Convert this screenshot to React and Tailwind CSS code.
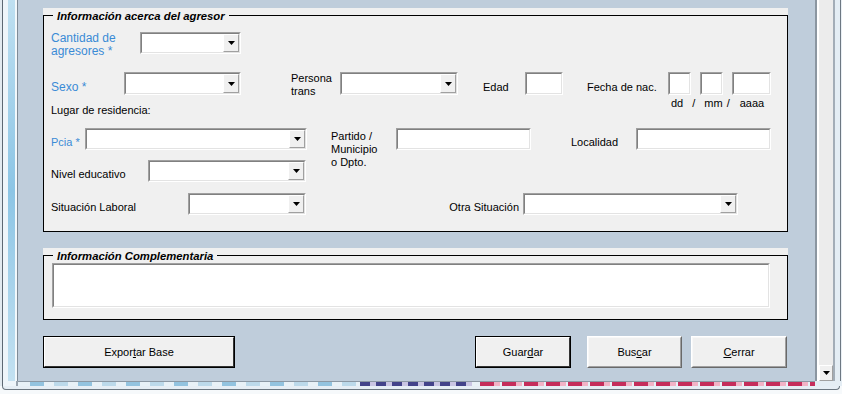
const arrowPath = "M0 0h7L3.5 4z";

function Arrow() {
  return (
    <svg width="7" height="4" viewBox="0 0 7 4">
      <path d={arrowPath} fill="#000" />
    </svg>
  );
}

// sunken edit box (windows classic look)
function Sunken({ className, children }) {
  return (
    <div className={`${className} border border-t-[#a0a0a0] border-l-[#a0a0a0] border-r-white border-b-white`}>
      <div className="h-full flex bg-white border border-t-[#808080] border-l-[#808080] border-r-[#e3e3e3] border-b-[#e3e3e3]">
        {children}
      </div>
    </div>
  );
}

function Combo({ className }) {
  return (
    <Sunken className={className}>
      <div className="flex-1" />
      <div className="w-[16px] flex items-center justify-center bg-[#f0f0f0] border border-t-white border-l-white border-r-[#a0a0a0] border-b-[#a0a0a0]">
        <Arrow />
      </div>
    </Sunken>
  );
}

function Btn({ className, primary, children }) {
  if (primary) {
    return (
      <div className={`${className} h-[32px] border border-black`}>
        <div className="h-full flex items-center justify-center bg-[#f0f0f0] border border-t-white border-l-white border-r-[#333] border-b-[#333] text-[11px]">
          {children}
        </div>
      </div>
    );
  }
  return (
    <div className={`${className} h-[32px] border border-t-white border-l-white border-r-[#696969] border-b-[#696969]`}>
      <div className="h-full flex items-center justify-center bg-[#f0f0f0] border border-t-[#f8f8f8] border-l-[#f8f8f8] border-r-[#a0a0a0] border-b-[#a0a0a0] text-[11px]">
        {children}
      </div>
    </div>
  );
}

function GroupBox({ title, height, children }) {
  return (
    <div className="w-[745px] bg-[#f0f0f0] pt-[7px]">
      <div className={`relative ${height} border border-black`}>
        <span className="absolute left-[9px] -top-[7px] px-[4px] bg-[#f0f0f0] text-[11.3px] leading-[14px] font-bold italic">
          {title}
        </span>
        {children}
      </div>
    </div>
  );
}

const strip = [];
for (let x = 12; x < 340; x += 24) strip.push([x, 14, (x / 24) % 2 < 1 ? "#93c3df" : "#bcd9ea"]);
for (let x = 342; x < 452; x += 16) strip.push([x, 10, "#43438a"], [x + 10, 6, "#c9c5e3"]);
for (let x = 462; x < 797; x += 22) strip.push([x, 14, "#c52d5b"], [x + 14, 6, "#f2b3c6"]);

export default function App() {
  return (
    <div className="w-[842px] h-[394px] overflow-hidden flex flex-col bg-[#f3f7fa] text-black font-['Liberation_Sans',Arial,sans-serif]">
      <div className="flex h-[381px]">
        {/* left window frame */}
        <div className="w-[18px] flex shrink-0">
          <div className="w-[2px] bg-[#e2eaf0]" />
          <div className="w-px bg-[#5d6873]" />
          <div className="w-[5px] bg-[#eef5fa]" />
          <div className="w-[7px] bg-linear-to-b from-[#bfe0f1] via-[#8cc5e5] to-[#c3e1f1]" />
          <div className="w-[2px] bg-[#f2f8fb]" />
          <div className="w-px bg-[#7f8b97]" />
        </div>

        {/* form */}
        <div className="w-[797px] shrink-0 bg-[#bfcddb] pl-[25px] pt-[8px]">
          <GroupBox title="Información acerca del agresor" height="h-[217px]">
            <div className="px-[7px] pt-[16px] text-[11px] leading-[13px]">
              <div className="flex items-start h-[22px]">
                <div className="w-[89px] text-[12px] leading-[13px] text-[#3a8bd6]">
                  Cantidad de
                  <br />
                  agresores *
                </div>
                <Combo className="w-[101px] h-[22px]" />
              </div>

              <div className="flex items-start h-[23px] mt-[18px]">
                <div className="w-[73px] text-[12px] leading-[14px] mt-[8px] text-[#3a8bd6]">Sexo *</div>
                <Combo className="w-[117px] h-[23px]" />
                <div className="ml-[50px] w-[49px]">
                  Persona
                  <br />
                  trans
                </div>
                <Combo className="w-[118px] h-[23px]" />
                <div className="ml-[25px] w-[42px] mt-[9px]">Edad</div>
                <Sunken className="w-[38px] h-[23px]" />
                <div className="ml-[24px] w-[81px] mt-[9px]">Fecha de nac.</div>
                <div className="flex flex-col">
                  <div className="flex">
                    <Sunken className="w-[23px] h-[23px]" />
                    <Sunken className="ml-[9px] w-[23px] h-[23px]" />
                    <Sunken className="ml-[9px] w-[39px] h-[23px]" />
                  </div>
                  <div className="flex mt-[2px] pl-[3px] whitespace-nowrap">
                    <span>dd</span>
                    <span className="ml-[9px]">/</span>
                    <span className="ml-[9px]">mm</span>
                    <span className="ml-[4px]">/</span>
                    <span className="ml-[10px]">aaaa</span>
                  </div>
                </div>
              </div>

              <div className="mt-[9px]">Lugar de residencia:</div>

              <div className="flex items-start h-[22px] mt-[11px]">
                <div className="w-[34px] mt-[8px] text-[#3a8bd6]">Pcia *</div>
                <Combo className="w-[222px] h-[22px]" />
                <div className="ml-[24px] w-[65px] mt-[2px]">
                  Partido /
                  <br />
                  Municipio
                  <br />
                  o Dpto.
                </div>
                <Sunken className="w-[135px] h-[22px]" />
                <div className="ml-[40px] w-[65px] mt-[8px]">Localidad</div>
                <Sunken className="w-[135px] h-[22px]" />
              </div>

              <div className="flex items-start h-[22px] mt-[10px]">
                <div className="w-[97px] mt-[8px]">Nivel educativo</div>
                <Combo className="w-[158px] h-[22px]" />
              </div>

              <div className="flex items-start h-[22px] mt-[11px]">
                <div className="w-[137px] mt-[8px]">Situación Laboral</div>
                <Combo className="w-[118px] h-[22px]" />
                <div className="w-[217px] pr-[4px] mt-[8px] text-right">Otra Situación</div>
                <Combo className="w-[215px] h-[22px]" />
              </div>
            </div>
          </GroupBox>

          <div className="mt-[16px]">
            <GroupBox title="Información Complementaria" height="h-[65px]">
              <div className="pl-[8px] pt-[7px]">
                <Sunken className="w-[718px] h-[45px]" />
              </div>
            </GroupBox>
          </div>

          <div className="flex mt-[16px]">
            <Btn className="w-[192px]" primary>
              <span>
                Expor<u>t</u>ar Base
              </span>
            </Btn>
            <Btn className="ml-[240px] w-[96px]" primary>
              <span>
                Guar<u>d</u>ar
              </span>
            </Btn>
            <Btn className="ml-[16px] w-[95px]">
              <span>
                Bus<u>c</u>ar
              </span>
            </Btn>
            <Btn className="ml-[9px] w-[96px]">
              <span>
                <u>C</u>errar
              </span>
            </Btn>
          </div>
        </div>

        {/* vertical scrollbar */}
        <div className="w-[2px] shrink-0 bg-[#8b96a1]" />
        <div className="w-[16px] shrink-0 flex flex-col bg-[#ececec] border-l-2 border-white">
          <div className="flex-1" />
          <div className="h-[16px] flex items-center justify-center bg-[#f0f0f0] border border-t-white border-l-white border-r-[#a0a0a0] border-b-[#a0a0a0]">
            <Arrow />
          </div>
        </div>

        {/* right window frame */}
        <div className="w-[9px] shrink-0 flex">
          <div className="w-[2px] bg-[#a3adb7]" />
          <div className="w-[5px] bg-[#e4edf4]" />
          <div className="w-px bg-[#6d7883]" />
          <div className="w-px bg-[#e9eff4]" />
        </div>
      </div>

      {/* bottom frame */}
      <div className="flex h-[5px]">
        <div className="w-[18px] flex shrink-0">
          <div className="w-[2px] bg-[#e2eaf0]" />
          <div className="w-px bg-[#5d6873]" />
          <div className="w-[13px] bg-[#eef5fa]" />
          <div className="w-[2px] bg-[#9aa5b0]" />
        </div>
        <div className="w-[797px] shrink-0 flex flex-col">
          <div className="h-px bg-[#8c98a4]" />
          <svg width="797" height="4" className="block bg-[#e8f1f7]">
            {strip.map(([x, w, c], i) => (
              <rect key={i} x={x} y="0" width={w} height="4" fill={c} />
            ))}
          </svg>
        </div>
        <div className="flex-1 bg-[#e4edf4]" />
      </div>
      <div className="h-[8px] px-[2px] bg-[#f6f9fb]">
        <div className="h-[4px] bg-[#e6eef5] border-l border-r border-b border-[#6b7680] rounded-b-[5px]" />
      </div>
    </div>
  );
}
